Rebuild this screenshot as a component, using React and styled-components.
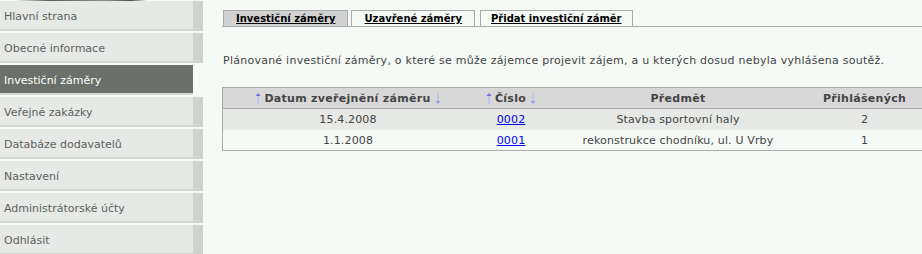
import React from 'react'
import styled, { createGlobalStyle } from 'styled-components'

const GlobalStyle = createGlobalStyle`
  html, body {
    margin: 0;
    padding: 0;
    background: #f5faf7;
    font-family: "DejaVu Sans", Verdana, sans-serif;
  }
`;

const Page = styled.div`
  display: flex;
  align-items: flex-start;
  width: 922px;
  height: 254px;
  overflow: hidden;
`;

const Sidebar = styled.nav`
  width: 203px;
  flex-shrink: 0;
  display: flex;
  flex-direction: column;
`;

const Item = styled.div`
  display: flex;
  height: 32px;
  padding-top: ${p => (p.$first ? 1 : 0)}px;
  background: ${p =>
    p.$scratch
      ? 'linear-gradient(90deg, transparent 8%, #5c5f5c 25%, #8a8d8a 55%, #4e514e 68%, transparent 76%) no-repeat 0 0 / 193px 1px'
      : 'none'};
`;

const Label = styled.div`
  width: 193px;
  height: 30px;
  box-sizing: border-box;
  padding: 3px 0 0 4px;
  display: flex;
  align-items: center;
  font-size: 11px;
  color: ${p => (p.$active ? '#ffffff' : '#5e615e')};
  background: ${p => (p.$active ? '#6b706b' : '#e6e9e6')};
  border-bottom: 2px solid #d4d8d4;
`;

const Strip = styled.div`
  width: 10px;
  height: 30px;
  background: ${p => (p.$active ? 'transparent' : '#cfd3cf')};
`;

const Content = styled.main`
  flex: 1;
  padding: 10px 0 0 19px;
`;

const Tabs = styled.div`
  display: flex;
  gap: 3px;
  height: 16px;
  border-bottom: 1px solid #a8aba8;
  padding-left: 1px;
`;

const Tab = styled.a`
  display: flex;
  align-items: center;
  box-sizing: border-box;
  height: 16px;
  padding: 0 ${p => p.$pad || 12}px;
  margin-right: ${p => p.$gap || 0}px;
  border: 1px solid #a8aba8;
  border-bottom: none;
  background: ${p => (p.$active ? '#d2d2d2' : '#f5faf7')};
  color: #000;
  font-size: 10px;
  font-weight: bold;
  text-decoration: underline;
`;

const Intro = styled.p`
  margin: 27px 0 0 1px;
  font-size: 11px;
  color: #444;
  letter-spacing: 0.25px;
`;

const Table = styled.table`
  margin-top: 20px;
  width: 700px;
  border-collapse: collapse;
  border-top: 1px solid #a8aba8;
  border-left: 1px solid #a8aba8;
  border-bottom: 1px solid #a8aba8;
  font-size: 11px;
  color: #444;
`;

const Th = styled.th`
  height: 20px;
  padding: 0;
  background: #d8d8d8;
  border-bottom: 1px solid #a8aba8;
  font-weight: bold;
  text-align: center;
  letter-spacing: 0.3px;
  width: ${p => p.$w}px;
`;

const Row = styled.tr`
  background: ${p => (p.$shade ? '#e6e9e6' : '#f5faf7')};
`;

const Td = styled.td`
  height: ${p => p.$h || 20}px;
  padding: 0;
  text-align: center;
  letter-spacing: 0.15px;
`;

const Num = styled.a`
  color: #0000ee;
  text-decoration: underline;
`;

const ArrowIcon = styled.svg`
  width: 6px;
  height: 11px;
  vertical-align: -2px;
  margin: ${p => (p.$down ? '0 0 0 4px' : '0 3px 0 0')};
`;

const Arrow = ({ down }) => (
  <ArrowIcon $down={down} viewBox="0 0 6 11">
    {down ? (
      <>
        <rect x="2.5" y="0" width="1.2" height="10" fill="#b4b8f4" />
        <path d="M0.5 8 L3.1 11 L5.7 8 Z" fill="#9aa0f0" />
      </>
    ) : (
      <>
        <rect x="2.5" y="1" width="1.2" height="10" fill="#b4b8f4" />
        <path d="M0.5 3 L3.1 0 L5.7 3 Z" fill="#6e74e8" />
      </>
    )}
  </ArrowIcon>
);

const menu = [
  'Hlavní strana',
  'Obecné informace',
  'Investiční záměry',
  'Veřejné zakázky',
  'Databáze dodavatelů',
  'Nastavení',
  'Administrátorské účty',
  'Odhlásit',
];

const rows = [
  { date: '15.4.2008', num: '0002', subject: 'Stavba sportovní haly', count: 2 },
  { date: '1.1.2008', num: '0001', subject: 'rekonstrukce chodníku, ul. U Vrby', count: 1 },
];

const App = () => {
  return (
    <Page>
      <GlobalStyle />
      <Sidebar>
        {menu.map((m, i) => {
          const active = m === 'Investiční záměry'
          return (
            <Item key={m} $first={i === 0} $scratch={i < 2}>
              <Label $active={active}>{m}</Label>
              <Strip $active={active} />
            </Item>
          )
        })}
      </Sidebar>
      <Content>
        <Tabs>
          <Tab $active>Investiční záměry</Tab>
          <Tab $gap={2}>Uzavřené záměry</Tab>
          <Tab $pad={10}>Přidat investiční záměr</Tab>
        </Tabs>
        <Intro>
          Plánované investiční záměry, o které se může zájemce projevit zájem, a u kterých dosud nebyla vyhlášena soutěž.
        </Intro>
        <Table>
          <thead>
            <tr>
              <Th $w={250}><Arrow />Datum zveřejnění záměru<Arrow down /></Th>
              <Th $w={76}><Arrow />Číslo<Arrow down /></Th>
              <Th $w={258}>Předmět</Th>
              <Th>Přihlášených</Th>
            </tr>
          </thead>
          <tbody>
            {rows.map((r, i) => (
              <Row key={r.num} $shade={i % 2 === 0}>
                <Td $h={i === 0 ? 21 : 20}>{r.date}</Td>
                <Td><Num href="#">{r.num}</Num></Td>
                <Td>{r.subject}</Td>
                <Td>{r.count}</Td>
              </Row>
            ))}
          </tbody>
        </Table>
      </Content>
    </Page>
  )
}

export default App
